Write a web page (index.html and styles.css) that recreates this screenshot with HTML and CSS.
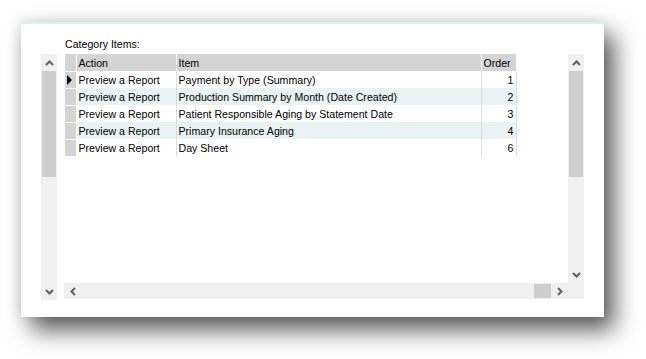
FILE: index.html
```html
<!DOCTYPE html>
<html lang="en">
<head>
  <meta charset="UTF-8">
  <title>Category Items</title>
  <link rel="stylesheet" href="styles.css">
</head>
<body>
  <div class="panel">
    <div class="label">Category Items:</div>
    <div class="content">
      <div class="vscroll tall">
        <div class="btn"><svg width="9" height="6" viewBox="0 0 9 6"><polyline points="1,5 4.5,1.5 8,5" fill="none" stroke="#606060" stroke-width="2"/></svg></div>
        <div class="thumb"></div>
        <div class="track"></div>
        <div class="btn"><svg width="9" height="6" viewBox="0 0 9 6"><polyline points="1,1 4.5,4.5 8,1" fill="none" stroke="#606060" stroke-width="2"/></svg></div>
      </div>

      <div class="viewer">
        <div class="data">
          <table class="grid">
            <colgroup>
              <col class="c-sel"><col class="c-action"><col class="c-item"><col class="c-order">
            </colgroup>
            <thead>
              <tr>
                <th class="sel"></th>
                <th>Action</th>
                <th>Item</th>
                <th>Order</th>
              </tr>
            </thead>
            <tbody>
              <tr>
                <td class="sel"><span class="arrow"></span></td>
                <td>Preview a Report</td>
                <td>Payment by Type (Summary)</td>
                <td class="num">1</td>
              </tr>
              <tr class="alt">
                <td class="sel"></td>
                <td>Preview a Report</td>
                <td>Production Summary by Month (Date Created)</td>
                <td class="num">2</td>
              </tr>
              <tr>
                <td class="sel"></td>
                <td>Preview a Report</td>
                <td>Patient Responsible Aging by Statement Date</td>
                <td class="num">3</td>
              </tr>
              <tr class="alt">
                <td class="sel"></td>
                <td>Preview a Report</td>
                <td>Primary Insurance Aging</td>
                <td class="num">4</td>
              </tr>
              <tr>
                <td class="sel"></td>
                <td>Preview a Report</td>
                <td>Day Sheet</td>
                <td class="num">6</td>
              </tr>
            </tbody>
          </table>
        </div>

        <div class="vscroll">
          <div class="btn"><svg width="9" height="6" viewBox="0 0 9 6"><polyline points="1,5 4.5,1.5 8,5" fill="none" stroke="#606060" stroke-width="2"/></svg></div>
          <div class="thumb"></div>
          <div class="track"></div>
          <div class="btn"><svg width="9" height="6" viewBox="0 0 9 6"><polyline points="1,1 4.5,4.5 8,1" fill="none" stroke="#606060" stroke-width="2"/></svg></div>
        </div>

        <div class="hscroll">
          <div class="hbtn"><svg width="6" height="9" viewBox="0 0 6 9"><polyline points="5,1 1.5,4.5 5,8" fill="none" stroke="#606060" stroke-width="2"/></svg></div>
          <div class="htrack"></div>
          <div class="hthumb"></div>
          <div class="hbtn"><svg width="6" height="9" viewBox="0 0 6 9"><polyline points="1,1 4.5,4.5 1,8" fill="none" stroke="#606060" stroke-width="2"/></svg></div>
        </div>
        <div class="corner"></div>
      </div>
    </div>
  </div>
</body>
</html>
```

FILE: styles.css
```css
html, body {
  height: 359px;
}
body {
  margin: 0;
  overflow: hidden;
  background: #fff;
  font-family: "Liberation Sans", Arial, sans-serif;
  font-size: 10.6px;
  color: #000;
}
.panel {
  margin: 22px 0 0 21px;
  border-top: 2px solid #d6f3ef;
  background: #fff;
  box-shadow: 10px 13px 22px rgba(0, 0, 0, 0.65), -2px -2px 12px rgba(0, 0, 0, 0.1);
  padding: 13px 0 0 20px;
  width: 563px;
  height: 280px;
}
.label {
  margin-left: 24px;
  line-height: 14px;
  height: 14px;
  margin-bottom: 3px;
}
.content {
  display: flex;
  gap: 7px;
}
.vscroll {
  width: 16px;
  background: #f0f0f0;
  display: flex;
  flex-direction: column;
}
.vscroll.tall {
  height: 246px;
}
.btn {
  height: 17px;
  display: flex;
  align-items: center;
  justify-content: center;
}
.thumb {
  height: 106px;
  margin: 0 1px;
  background: #cdcdcd;
}
.track {
  flex: 1;
}
.viewer {
  display: grid;
  grid-template-columns: 504px 16px;
  grid-template-rows: 229px 16px;
}
.data {
  padding-left: 1px;
  background: #fff;
}
.grid {
  border-collapse: collapse;
  table-layout: fixed;
  width: 451px;
}
.c-sel { width: 11px; }
.c-action { width: 100px; }
.c-item { width: 305px; }
.c-order { width: 35px; }
.grid th,
.grid td {
  height: 17px;
  padding: 1px 2px 0;
  line-height: 16px;
  text-align: left;
  font-weight: normal;
  white-space: nowrap;
  overflow: hidden;
  box-sizing: border-box;
}
.grid th {
  background: #d4d4d4;
  border-left: 1px solid #fff;
}
.grid th.sel {
  border-left: none;
}
.grid td {
  border-left: 1px solid #dcdcdc;
}
.grid td.num {
  text-align: right;
  border-right: 1px solid #dcdcdc;
}
.grid .sel {
  padding: 0;
  background: #d4d4d4;
  border-right: 1px solid #fff;
}
.grid td.sel {
  border-left: none;
  border-top: 1px solid #fff;
}
.grid tr.alt td {
  background: #e9f3f3;
}
.grid tr.alt td.sel {
  background: #d4d4d4;
}
.arrow {
  display: block;
  width: 0;
  height: 0;
  margin-left: 2px;
  border-left: 5px solid #000;
  border-top: 5px solid transparent;
  border-bottom: 5px solid transparent;
}
.hscroll {
  background: #f0f0f0;
  display: flex;
}
.hbtn {
  width: 17px;
  display: flex;
  align-items: center;
  justify-content: center;
}
.htrack {
  flex: 1;
}
.hthumb {
  width: 17px;
  margin: 1px 0;
  background: #cdcdcd;
}
.corner {
  background: #f0f0f0;
}
```
